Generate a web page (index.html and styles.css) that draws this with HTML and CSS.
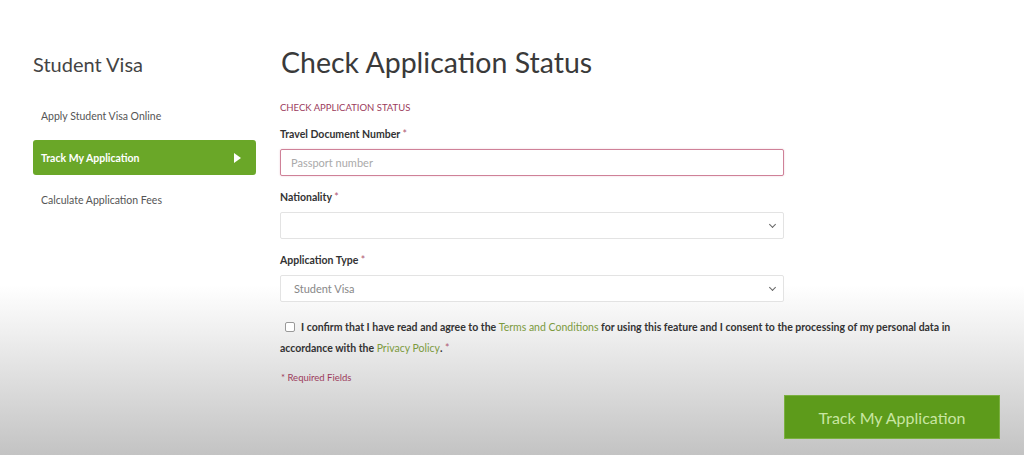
FILE: index.html
```html
<!DOCTYPE html>
<html lang="en">
<head>
    <meta charset="UTF-8">
    <meta name="viewport" content="width=device-width, initial-scale=1.0">
    <title>Check Application Status</title>
    <link rel="stylesheet" href="styles.css">
</head>
<body>
    <div class="page">
        <aside class="sidebar">
            <h2>Student Visa</h2>
            <nav class="side-nav">
                <a href="#">Apply Student Visa Online</a>
                <a href="#" class="active">Track My Application <span class="arrow"></span></a>
                <a href="#">Calculate Application Fees</a>
            </nav>
        </aside>

        <main class="content">
            <h1>Check Application Status</h1>
            <p class="section-label">CHECK APPLICATION STATUS</p>

            <form class="status-form">
                <div class="form-group">
                    <label for="doc">Travel Document Number <span class="req">*</span></label>
                    <input type="text" id="doc" class="field field-focus" placeholder="Passport number">
                </div>

                <div class="form-group">
                    <label for="nationality">Nationality <span class="req">*</span></label>
                    <div class="select-wrap">
                        <select id="nationality" class="field"><option></option></select>
                    </div>
                </div>

                <div class="form-group">
                    <label for="apptype">Application Type <span class="req">*</span></label>
                    <div class="select-wrap">
                        <select id="apptype" class="field muted"><option>Student Visa</option></select>
                    </div>
                </div>

                <p class="consent"><input type="checkbox" id="agree">I confirm that I have read and agree to the <a href="#">Terms and Conditions</a> for using this feature and I consent to the processing of my personal data in accordance with the <a href="#">Privacy Policy</a>. <span class="req">*</span></p>

                <p class="required-note">* Required Fields</p>

                <div class="actions">
                    <button type="submit" class="track-btn">Track My Application</button>
                </div>
            </form>
        </main>
    </div>
</body>
</html>
```

FILE: styles.css
```css
* { margin: 0; padding: 0; box-sizing: border-box; }

html, body {
    height: 100%;
}

body {
    font-family: Lato, "Open Sans", sans-serif;
    background: linear-gradient(180deg, #ffffff 0px, #ffffff 285px, #f0f0f0 330px, #c3c3c3 455px);
    color: #333;
    overflow: hidden;
}

.page {
    display: flex;
    gap: 24px;
    padding: 52px 0 0 33px;
}

.sidebar {
    width: 223px;
    flex-shrink: 0;
}

.sidebar h2 {
    font-size: 20px;
    font-weight: 400;
    color: #444;
    line-height: 24px;
    margin-bottom: 22px;
}

.side-nav {
    display: flex;
    flex-direction: column;
    gap: 7px;
}

.side-nav a {
    display: flex;
    align-items: center;
    justify-content: space-between;
    height: 35px;
    padding: 0 15px 0 8px;
    font-size: 10.5px;
    color: #555;
    text-decoration: none;
    border-radius: 3px;
}

.side-nav a.active {
    background: #6aa728;
    color: #fff;
    font-weight: 700;
}

.arrow {
    width: 0;
    height: 0;
    border-top: 5px solid transparent;
    border-bottom: 5px solid transparent;
    border-left: 7px solid #fff;
}

.content {
    flex: 1;
    margin-top: -5px;
    padding-right: 24px;
}

.content h1 {
    font-size: 28.5px;
    font-weight: 400;
    color: #3a3a3a;
    line-height: 30px;
    margin-left: 1px;
    margin-bottom: 25px;
}

.section-label {
    font-size: 9.5px;
    color: #9c3b5c;
    line-height: 12px;
    margin-bottom: 14px;
}

.form-group {
    width: 504px;
    margin-bottom: 15px;
}

.form-group label {
    display: block;
    font-size: 10.5px;
    font-weight: 700;
    color: #333;
    margin-bottom: 8px;
    line-height: 13px;
}

.req {
    color: #b05a74;
    font-weight: 400;
}

.field {
    width: 100%;
    height: 27px;
    border: 1px solid #e3e3e3;
    background: #fff;
    font-family: inherit;
    font-size: 11px;
    padding: 0 10px;
    color: #333;
    border-radius: 2px;
}

.field::placeholder {
    color: #aaa;
}

.field-focus {
    border: 1.5px solid #cf8198;
    box-shadow: 0 0 2px rgba(207, 129, 152, 0.4);
    outline: none;
}

.select-wrap {
    position: relative;
}

.select-wrap::after {
    content: "";
    position: absolute;
    right: 9px;
    top: 10px;
    width: 4px;
    height: 4px;
    border-right: 1.5px solid #666;
    border-bottom: 1.5px solid #666;
    transform: rotate(45deg);
    pointer-events: none;
}

select.field {
    appearance: none;
    -webkit-appearance: none;
    padding-left: 13px;
}

select.muted {
    color: #888;
}

.consent {
    width: 680px;
    margin: 14px 0 13px 0;
    font-size: 10.5px;
    font-weight: 700;
    color: #333;
    line-height: 21px;
}

.consent input {
    width: 10px;
    height: 10px;
    margin: 0 6px 0 5px;
    vertical-align: -1px;
    appearance: none;
    -webkit-appearance: none;
    border: 1px solid #999;
    border-radius: 2px;
    background: #fff;
}

.consent a {
    color: #7c9a3e;
    text-decoration: none;
    font-weight: 400;
}

.required-note {
    font-size: 9.5px;
    color: #9c3b5c;
    line-height: 12px;
    margin-left: 1px;
}

.actions {
    display: flex;
    justify-content: flex-end;
    width: 720px;
    margin-top: 11px;
}

.track-btn {
    width: 216px;
    height: 44px;
    background: #5d9b1b;
    color: #c9e6a2;
    border: 1px solid #7bb040;
    font-family: inherit;
    font-size: 16px;
    cursor: pointer;
}
```
